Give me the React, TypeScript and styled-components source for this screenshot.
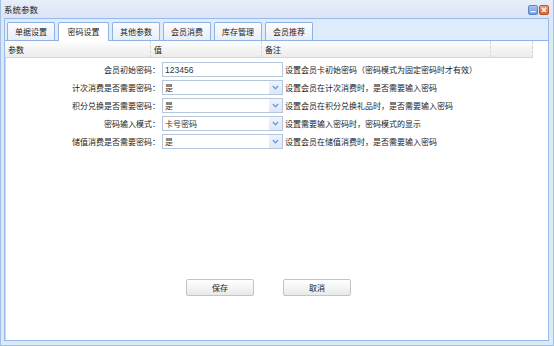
import React from "react";
import styled, { createGlobalStyle } from "styled-components";

const GlobalStyle = createGlobalStyle`
  html, body { margin: 0; padding: 0; background: #fff; }
  body { font-family: "Noto Sans CJK SC", "Noto Sans", sans-serif; }
  * { box-sizing: border-box; }
`;

const Window = styled.div`
  width: 554px;
  height: 346px;
  background: #dfe8f6;
  border: 1px solid #a3bfe6;
  border-top: none;
  display: flex;
  flex-direction: column;
`;

const TitleBar = styled.div`
  height: 18px;
  flex: none;
  display: flex;
  align-items: center;
  justify-content: space-between;
  padding: 0 4px 0 3px;
  background: linear-gradient(#e6eef9, #dae5f5);
`;

const Title = styled.span`
  font-size: 8.5px;
  color: #1b1b1b;
  line-height: 1;
`;

const Tools = styled.div`
  display: flex;
  gap: 1px;
  margin-top: 2px;
`;

const ToolBtn = styled.div<{ $kind: "min" | "close" }>`
  width: 10px;
  height: 10px;
  border-radius: 2px;
  position: relative;
  background: ${(p) =>
    p.$kind === "min"
      ? "linear-gradient(#a9c6ee, #6f9ad8)"
      : "linear-gradient(#f3a27c, #d9602f)"};
  border: 1px solid ${(p) => (p.$kind === "min" ? "#5b87c6" : "#c0532a")};
  display: flex;
  align-items: center;
  justify-content: center;
`;

const Panel = styled.div`
  flex: 1;
  margin: 0 4px 4px 3px;
  border: 1px solid #99bbe8;
  box-shadow: inset 1px 0 0 #c9dbf3;
  background: #fff;
  display: flex;
  flex-direction: column;
`;

const TabStrip = styled.div`
  height: 22px;
  flex: none;
  background: #deecfd;
  border-bottom: 1px solid #8db2e3;
  display: flex;
  align-items: flex-end;
  gap: 3px;
  padding: 0 0 0 2px;
`;

const Tab = styled.div<{ $active?: boolean }>`
  width: ${(p) => (p.$active ? 51 : 48)}px;
  height: ${(p) => (p.$active ? 19 : 18)}px;
  margin-bottom: ${(p) => (p.$active ? -1 : 0)}px;
  border: 1px solid #8db2e3;
  border-bottom: none;
  border-radius: 2px 2px 0 0;
  background: ${(p) =>
    p.$active ? "#fff" : "linear-gradient(#fbfcfe, #e9eef6)"};
  font-size: 8px;
  color: #222;
  display: flex;
  align-items: center;
  justify-content: center;
  padding-bottom: ${(p) => (p.$active ? 1 : 0)}px;
`;

const GridHeader = styled.div`
  height: 17px;
  flex: none;
  display: flex;
`;

const HeadCell = styled.div<{ $w: number }>`
  width: ${(p) => p.$w}px;
  flex: none;
  background: linear-gradient(#fdfdfd, #ececec);
  border-bottom: 1px solid #d7d7d7;
  border-right: 1px dashed #d4d4d4;
  font-size: 8px;
  color: #222;
  padding-left: 3px;
  display: flex;
  align-items: center;
`;

const HeadFill = styled.div`
  width: 16px;
  flex: none;
`;

const Form = styled.div`
  display: flex;
  flex-direction: column;
  gap: 3px;
  padding-top: 4px;
`;

const Row = styled.div`
  display: grid;
  grid-template-columns: 155px 121px auto;
  column-gap: 2px;
  height: 15px;
  align-items: center;
`;

const Label = styled.div`
  font-size: 8px;
  color: #222;
  text-align: right;
  white-space: nowrap;
`;

const Field = styled.div`
  height: 15px;
  border: 1px solid #b6c6dc;
  background: #fff;
  display: flex;
  align-items: center;
  position: relative;
`;

const FieldText = styled.span<{ $digits?: boolean }>`
  flex: 1;
  padding-left: 2px;
  font-size: ${(p) => (p.$digits ? 8.5 : 8)}px;
  font-family: ${(p) =>
    p.$digits ? '"Liberation Sans", sans-serif' : "inherit"};
  color: #333;
  white-space: nowrap;
`;

const Trigger = styled.div`
  width: 13px;
  height: 100%;
  background: linear-gradient(#eef4fc, #dde8f7);
  display: flex;
  align-items: center;
  justify-content: center;
`;

const Desc = styled.div`
  font-size: 8px;
  color: #222;
  white-space: nowrap;
`;

const ButtonRow = styled.div`
  margin-top: 130px;
  display: flex;
  justify-content: center;
  gap: 29px;
  padding-right: 16px;
`;

const Button = styled.div`
  width: 68px;
  height: 17px;
  border: 1px solid #c4c4c4;
  border-radius: 2px;
  background: linear-gradient(#ffffff, #e9e9e9);
  font-size: 8px;
  color: #222;
  display: flex;
  align-items: center;
  justify-content: center;
`;

const Chevron = () => (
  <svg width="7" height="5" viewBox="0 0 7 5">
    <path d="M0.8 1 L3.5 3.8 L6.2 1" fill="none" stroke="#6d9bd9" strokeWidth="1.3" />
  </svg>
);

const MinIcon = () => (
  <svg width="6" height="6" viewBox="0 0 6 6">
    <rect x="0.5" y="4" width="5" height="1.3" fill="#fff" />
  </svg>
);

const CloseIcon = () => (
  <svg width="6" height="6" viewBox="0 0 6 6">
    <path d="M1 1 L5 5 M5 1 L1 5" stroke="#fff" strokeWidth="1.4" />
  </svg>
);

type RowData = { label: string; value: string; select: boolean; desc: string };

const rows: RowData[] = [
  { label: "会员初始密码：", value: "123456", select: false, desc: "设置会员卡初始密码（密码模式为固定密码时才有效）" },
  { label: "计次消费是否需要密码：", value: "是", select: true, desc: "设置会员在计次消费时，是否需要输入密码" },
  { label: "积分兑换是否需要密码：", value: "是", select: true, desc: "设置会员在积分兑换礼品时，是否需要输入密码" },
  { label: "密码输入模式：", value: "卡号密码", select: true, desc: "设置需要输入密码时，密码模式的显示" },
  { label: "储值消费是否需要密码：", value: "是", select: true, desc: "设置会员在储值消费时，是否需要输入密码" },
];

const tabs = ["单据设置", "密码设置", "其他参数", "会员消费", "库存管理", "会员推荐"];

export default function App() {
  return (
    <>
      <GlobalStyle />
      <Window>
        <TitleBar>
          <Title>系统参数</Title>
          <Tools>
            <ToolBtn $kind="min"><MinIcon /></ToolBtn>
            <ToolBtn $kind="close"><CloseIcon /></ToolBtn>
          </Tools>
        </TitleBar>
        <Panel>
          <TabStrip>
            {tabs.map((t, i) => (
              <Tab key={t} $active={i === 1}>{t}</Tab>
            ))}
          </TabStrip>
          <GridHeader>
            <HeadCell $w={146}>参数</HeadCell>
            <HeadCell $w={111}>值</HeadCell>
            <HeadCell $w={229}>备注</HeadCell>
            <HeadCell $w={42} />
            <HeadFill />
          </GridHeader>
          <Form>
            {rows.map((r) => (
              <Row key={r.label}>
                <Label>{r.label}</Label>
                <Field>
                  <FieldText $digits={!r.select}>{r.value}</FieldText>
                  {r.select && (
                    <Trigger><Chevron /></Trigger>
                  )}
                </Field>
                <Desc>{r.desc}</Desc>
              </Row>
            ))}
          </Form>
          <ButtonRow>
            <Button>保存</Button>
            <Button>取消</Button>
          </ButtonRow>
        </Panel>
      </Window>
    </>
  );
}
